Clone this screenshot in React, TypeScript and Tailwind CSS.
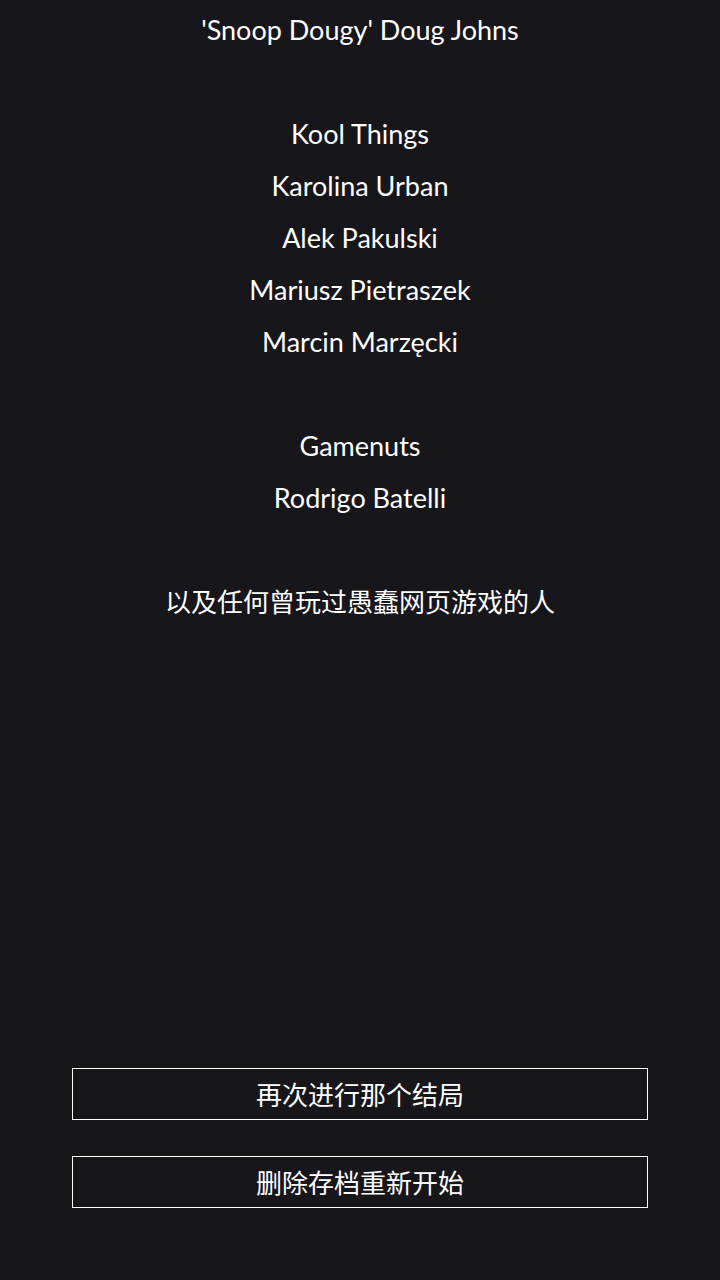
export default function App() {
  const lines = [
    "'Snoop Dougy' Doug Johns",
    "",
    "Kool Things",
    "Karolina Urban",
    "Alek Pakulski",
    "Mariusz Pietraszek",
    "Marcin Marzęcki",
    "",
    "Gamenuts",
    "Rodrigo Batelli",
    "",
  ];

  return (
    <div
      className="flex h-[1280px] w-[720px] flex-col bg-[#17161b] text-white"
      style={{ fontFamily: "Lato, 'Noto Sans CJK SC', sans-serif" }}
    >
      <div className="flex flex-col items-center pt-[4px]">
        {lines.map((line, idx) => (
          <div key={idx} className="h-[52px] text-[27px] leading-[52px]">
            {line}
          </div>
        ))}
        <div className="h-[52px] text-[26px] leading-[52px]">
          以及任何曾玩过愚蠢网页游戏的人
        </div>
      </div>
      <div className="mt-auto flex flex-col gap-[36px] px-[72px] pb-[72px]">
        <button className="h-[52px] border border-white pt-[2px] text-[26px] leading-none text-white">
          再次进行那个结局
        </button>
        <button className="h-[52px] border border-white pt-[2px] text-[26px] leading-none text-white">
          删除存档重新开始
        </button>
      </div>
    </div>
  );
}
